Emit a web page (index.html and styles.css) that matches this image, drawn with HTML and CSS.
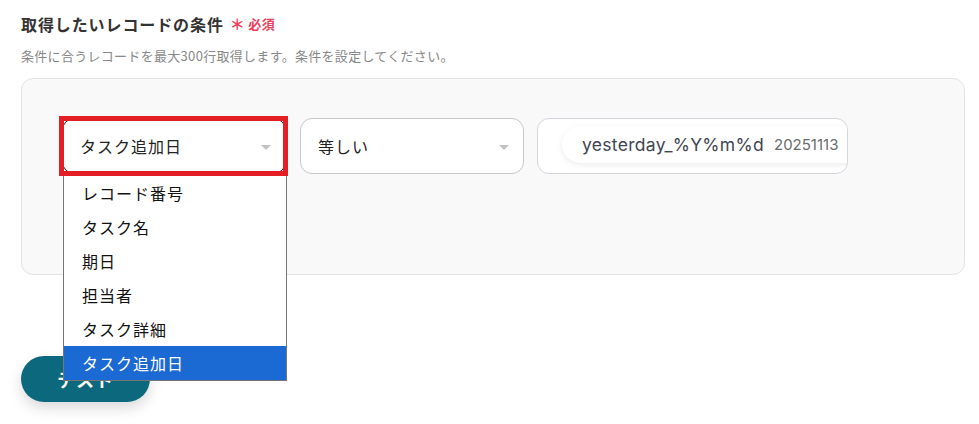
FILE: index.html
```html
<!DOCTYPE html>
<html lang="ja">
<head>
<meta charset="utf-8">
<link rel="stylesheet" href="styles.css">
</head>
<body>
<div class="page">
  <div class="title">取得したいレコードの条件<span class="req"><span class="ast">＊</span>必須</span></div>
  <div class="sub">条件に合うレコードを最大300行取得します。条件を設定してください。</div>
  <div class="panel">
    <div class="row">
      <div class="field-wrap">
        <div class="select">
          <span class="sel-text">タスク追加日</span>
          <span class="arrow"></span>
        </div>
        <div class="highlight"></div>
        <ul class="dropdown">
          <li>レコード番号</li>
          <li>タスク名</li>
          <li>期日</li>
          <li>担当者</li>
          <li>タスク詳細</li>
          <li class="active">タスク追加日</li>
        </ul>
      </div>
      <div class="select">
        <span class="sel-text">等しい</span>
        <span class="arrow"></span>
      </div>
      <div class="input">
        <div class="pill"><span class="var">yesterday_%Y%m%d</span><span class="val">20251113</span></div>
      </div>
    </div>
  </div>
  <button class="test">テスト</button>
</div>
</body>
</html>
```
FILE: styles.css
```css
* { box-sizing: border-box; }
html, body { margin: 0; padding: 0; background: #fff; }
body {
  font-family: "Noto Sans CJK JP", "Noto Sans", sans-serif;
  color: #333;
  width: 979px;
  height: 424px;
  overflow: hidden;
}
.page { padding: 13px 0 0 21px; }
.title {
  font-size: 16px;
  font-weight: 700;
  letter-spacing: 0.9px;
  line-height: 22px;
  color: #333;
  display: flex;
  align-items: center;
}
.req {
  color: #e8425a;
  font-size: 13px;
  font-weight: 700;
  letter-spacing: 0.5px;
  margin-left: 6px;
  display: flex;
  align-items: center;
}
.ast { font-size: 15px; margin-right: 3px; }
.sub {
  margin-top: 12px;
  font-size: 13px;
  letter-spacing: 0.3px;
  color: #888;
  line-height: 18px;
}
.panel {
  margin-top: 13px;
  width: 944px;
  height: 197px;
  background: #f9f9f9;
  border: 1px solid #e3e3e3;
  border-radius: 12px;
  padding: 39px 0 0 40px;
}
.row { display: flex; gap: 14px; align-items: flex-start; }
.field-wrap { position: relative; }
.select {
  width: 224px;
  height: 56px;
  background: #fff;
  border: 1px solid #c8c8c8;
  border-radius: 12px;
  display: flex;
  align-items: center;
  justify-content: space-between;
  padding: 0 14px 0 17px;
}
.field-wrap .select { border-color: #222; }
.sel-text { font-size: 16px; letter-spacing: 1px; color: #222; }
.arrow {
  width: 0; height: 0;
  border-left: 5px solid transparent;
  border-right: 5px solid transparent;
  border-top: 5px solid #c2c2c2;
  margin-top: 2px;
}
.highlight {
  position: absolute;
  left: -3px; top: -2px;
  width: 229px; height: 60px;
  border: 5px solid #e31e24;
  pointer-events: none;
}
.dropdown {
  position: absolute;
  left: 1px; top: 58px;
  width: 224px;
  margin: 0; padding: 0;
  list-style: none;
  background: #fff;
  border: 1px solid #767676;
  border-top: none;
  z-index: 5;
}
.dropdown li {
  height: 34px;
  line-height: 34px;
  padding-left: 18px;
  font-size: 16px;
  letter-spacing: 1px;
  color: #111;
}
.dropdown li.active { background: #1b69d3; color: #fff; }
.input {
  width: 311px;
  height: 56px;
  background: #fff;
  border: 1px solid #d3d6dc;
  border-radius: 12px;
  overflow: hidden;
  padding: 7px 0 0 24px;
  margin-left: -1px;
}
.pill {
  display: inline-flex;
  align-items: center;
  white-space: nowrap;
  height: 37px;
  border-radius: 19px;
  background: #fff;
  box-shadow: 0 2px 6px rgba(0,0,0,0.08);
  padding: 0 20px;
  width: 360px;
}
.var { font-family: Inter, "Noto Sans", sans-serif; font-size: 17.5px; color: #3f4552; letter-spacing: 0.3px; }
.val { font-family: Inter, "Noto Sans", sans-serif; font-size: 15px; color: #6b6b6b; margin-left: 10px; }
.test {
  display: block;
  margin-top: 81px;
  width: 129px;
  height: 46px;
  border: none;
  border-radius: 23px;
  background: #0c687c;
  color: #fff;
  font-family: "Noto Sans CJK JP", sans-serif;
  font-size: 18px;
  font-weight: 700;
  letter-spacing: 1px;
  box-shadow: 0 6px 14px rgba(0,0,0,0.15);
}
```
